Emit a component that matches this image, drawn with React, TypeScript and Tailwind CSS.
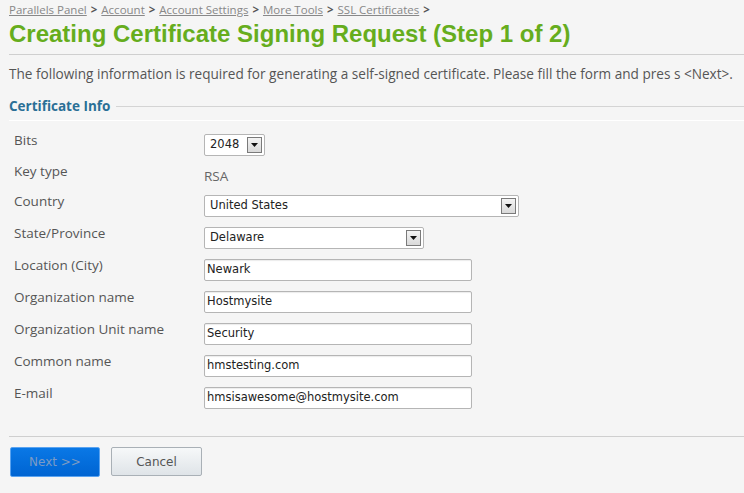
const crumbs = ["Parallels Panel", "Account", "Account Settings", "More Tools", "SSL Certificates"]

function Select({ value, width }: { value: string; width: string }) {
  return (
    <div className={`flex h-[22px] ${width} items-stretch rounded-[2px] border border-[#b5b5b5] bg-white`}>
      <div className="flex flex-1 items-center pl-[5px] font-['DejaVu_Sans',sans-serif] text-[11.5px] text-[#222]">{value}</div>
      <div className="m-[2px] flex w-[15px] items-center justify-center border border-[#7a7a7a] bg-gradient-to-b from-[#f4f4f4] to-[#d9d9d9]">
        <svg width="7" height="4" viewBox="0 0 7 4">
          <path d="M0 0h7L3.5 4z" fill="#111" />
        </svg>
      </div>
    </div>
  )
}

function Field({ value }: { value: string }) {
  return (
    <div className="flex h-[22px] w-[268px] items-center rounded-[2px] border border-[#b5b5b5] bg-white pl-[2px] font-['DejaVu_Sans',sans-serif] text-[11.5px] text-[#222] shadow-[inset_0_1px_1px_rgba(0,0,0,0.08)]">
      {value}
    </div>
  )
}

const rows: { label: string; h: string; el: React.ReactNode }[] = [
  { label: "Bits", h: "h-[31px]", el: <Select value="2048" width="w-[61px]" /> },
  { label: "Key type", h: "h-[30px]", el: <div className="pt-[1px] text-[13.5px] text-[#666]">RSA</div> },
  { label: "Country", h: "h-[32px]", el: <Select value="United States" width="w-[315px]" /> },
  { label: "State/Province", h: "h-[32px]", el: <Select value="Delaware" width="w-[220px]" /> },
  { label: "Location (City)", h: "h-[32px]", el: <Field value="Newark" /> },
  { label: "Organization name", h: "h-[32px]", el: <Field value="Hostmysite" /> },
  { label: "Organization Unit name", h: "h-[32px]", el: <Field value="Security" /> },
  { label: "Common name", h: "h-[32px]", el: <Field value="hmstesting.com" /> },
  { label: "E-mail", h: "h-[32px]", el: <Field value="hmsisawesome@hostmysite.com" /> },
]

export default function App() {
  return (
    <div className="h-[493px] w-[744px] overflow-hidden bg-[#f5f5f5] pl-[9px] font-['Open_Sans',sans-serif] text-[#555]">
      <div className="pt-[2px] text-[11.5px] leading-[16px]">
        {crumbs.map((c) => (
          <span key={c}>
            <a className="text-[#888] underline">{c}</a>
            <span className="mx-[4px] font-bold text-[#555]">&gt;</span>
          </span>
        ))}
      </div>
      <h1 className="mt-[2px] font-['Liberation_Sans',Arial,sans-serif] text-[24px] font-bold leading-[28px] text-[#66ad1d]">
        Creating Certificate Signing Request (Step 1 of 2)
      </h1>
      <div className="mt-[6px] h-px bg-[#cfcfcf]" />
      <p className="mt-[11px] text-[13.6px] leading-[16px] text-[#555]">
        The following information is required for generating a self-signed certificate. Please fill the form and pres s &lt;Next&gt;.
      </p>
      <div className="mt-[16px] flex items-center">
        <span className="pr-[6px] text-[13.5px] font-bold leading-[16px] text-[#2a6f96]">Certificate Info</span>
        <div className="h-px flex-1 bg-[#d4d4d4]" />
      </div>
      <div className="mt-[6px] h-px bg-white" />
      <div className="mt-[13px] pl-[5px]">
        {rows.map((r) => (
          <div key={r.label} className={`flex ${r.h}`}>
            <div className="-mt-[3px] w-[190px] text-[13.5px] leading-[18px] text-[#555]">{r.label}</div>
            <div>{r.el}</div>
          </div>
        ))}
      </div>
      <div className="mt-[17px] h-px bg-[#cfcfcf]" />
      <div className="mt-[10px] flex gap-[11px] pl-px">
        <button className="h-[30px] w-[90px] rounded-[2px] border border-[#5aa3f0] bg-gradient-to-b from-[#0a78e6] to-[#0064d2] font-['DejaVu_Sans',sans-serif] text-[12px] text-[#7c9bc4]">
          Next &gt;&gt;
        </button>
        <button className="h-[29px] w-[91px] rounded-[2px] border border-[#a9b0b6] bg-gradient-to-b from-[#f6f8f9] to-[#dfe4e8] font-['DejaVu_Sans',sans-serif] text-[12px] text-[#555]">
          Cancel
        </button>
      </div>
    </div>
  )
}
